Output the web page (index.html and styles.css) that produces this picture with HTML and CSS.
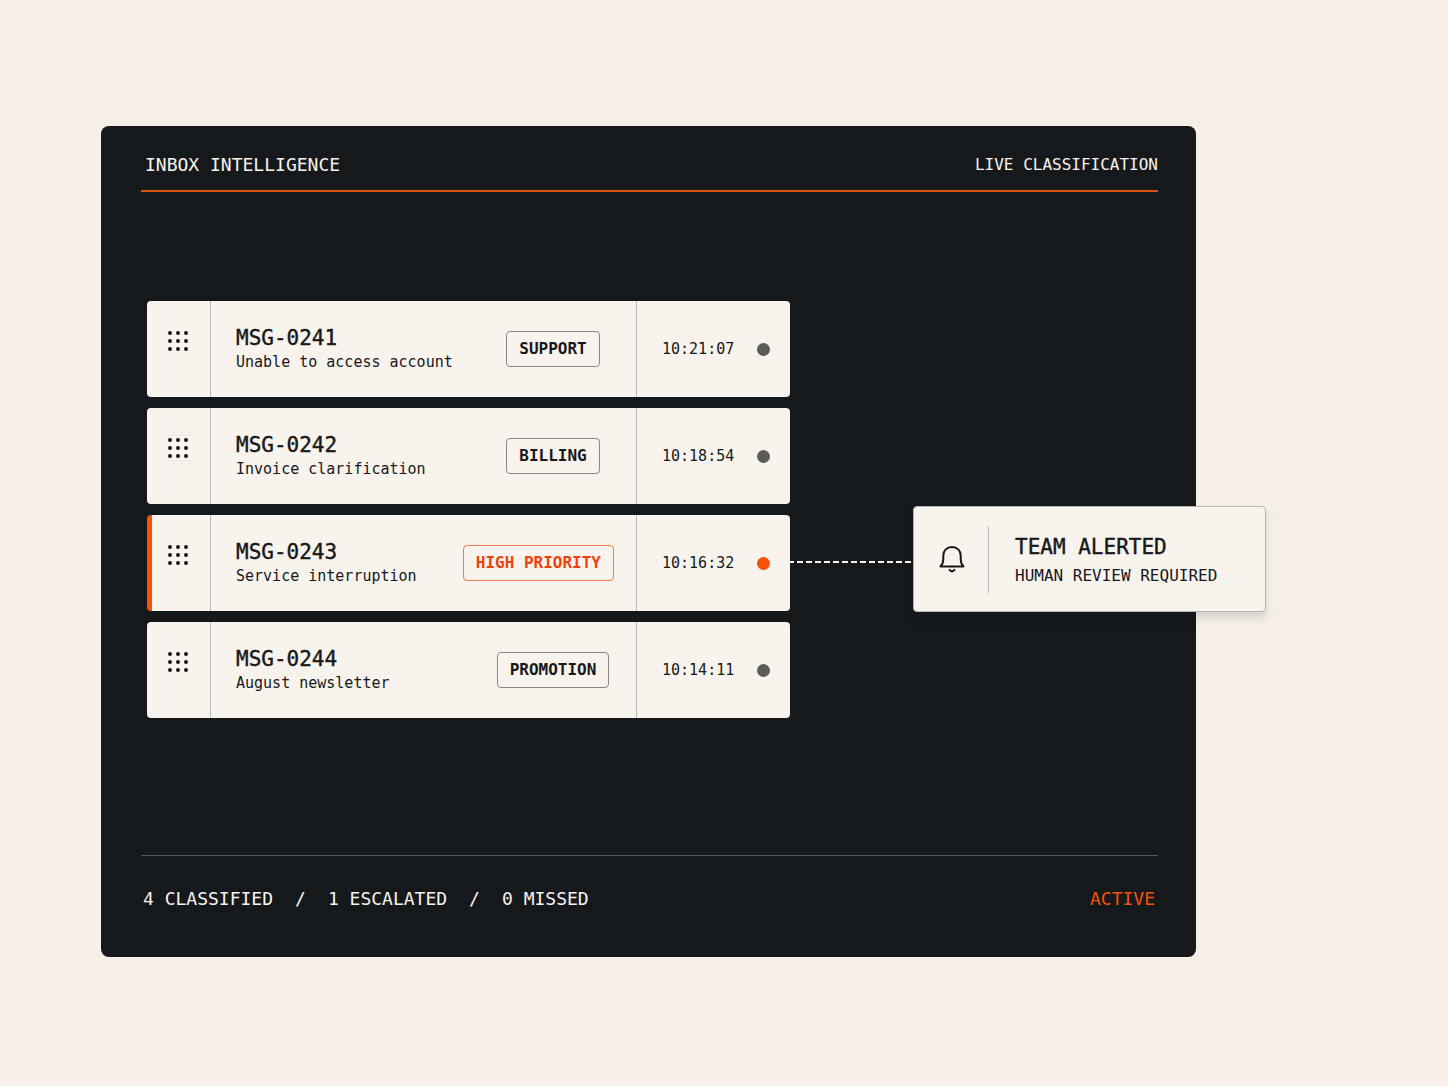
FILE: index.html
```html
<!DOCTYPE html>
<html lang="en">
<head>
  <meta charset="utf-8">
  <meta name="viewport" content="width=device-width, initial-scale=1">
  <title>Inbox Intelligence</title>
  <link rel="stylesheet" href="styles.css">
</head>
<body>
  <svg width="0" height="0" class="sprite" aria-hidden="true">
    <symbol id="grip" viewBox="0 0 22 22">
      <circle cx="3" cy="3" r="2"/><circle cx="11" cy="3" r="2"/><circle cx="19" cy="3" r="2"/>
      <circle cx="3" cy="11" r="2"/><circle cx="11" cy="11" r="2"/><circle cx="19" cy="11" r="2"/>
      <circle cx="3" cy="19" r="2"/><circle cx="11" cy="19" r="2"/><circle cx="19" cy="19" r="2"/>
    </symbol>
  </svg>

  <main class="panel">
    <header class="panel-header">
      <h1 class="panel-title">INBOX INTELLIGENCE</h1>
      <p class="panel-mode">LIVE CLASSIFICATION</p>
    </header>

    <div class="board">
      <ul class="messages">
        <li class="message">
          <button class="grip" type="button" aria-label="Reorder MSG-0241"><svg class="grip-icon"><use href="#grip"/></svg></button>
          <div class="message-body">
            <div class="message-text">
              <h2 class="message-id">MSG-0241</h2>
              <p class="message-subject">Unable to access account</p>
            </div>
            <div class="tag-slot"><span class="tag">SUPPORT</span></div>
          </div>
          <div class="message-meta"><time>10:21:07</time><span class="dot"></span></div>
        </li>
        <li class="message">
          <button class="grip" type="button" aria-label="Reorder MSG-0242"><svg class="grip-icon"><use href="#grip"/></svg></button>
          <div class="message-body">
            <div class="message-text">
              <h2 class="message-id">MSG-0242</h2>
              <p class="message-subject">Invoice clarification</p>
            </div>
            <div class="tag-slot"><span class="tag">BILLING</span></div>
          </div>
          <div class="message-meta"><time>10:18:54</time><span class="dot"></span></div>
        </li>
        <li class="message message-urgent">
          <button class="grip" type="button" aria-label="Reorder MSG-0243"><svg class="grip-icon"><use href="#grip"/></svg></button>
          <div class="message-body">
            <div class="message-text">
              <h2 class="message-id">MSG-0243</h2>
              <p class="message-subject">Service interruption</p>
            </div>
            <div class="tag-slot"><span class="tag">HIGH PRIORITY</span></div>
          </div>
          <div class="message-meta"><time>10:16:32</time><span class="dot"></span></div>
        </li>
        <li class="message">
          <button class="grip" type="button" aria-label="Reorder MSG-0244"><svg class="grip-icon"><use href="#grip"/></svg></button>
          <div class="message-body">
            <div class="message-text">
              <h2 class="message-id">MSG-0244</h2>
              <p class="message-subject">August newsletter</p>
            </div>
            <div class="tag-slot"><span class="tag">PROMOTION</span></div>
          </div>
          <div class="message-meta"><time>10:14:11</time><span class="dot"></span></div>
        </li>
      </ul>

      <div class="escalation">
        <svg class="connector" aria-hidden="true"><line x1="0" y1="9" x2="100%" y2="9"/></svg>
        <aside class="alert">
          <svg class="bell" viewBox="0 0 28 30" aria-hidden="true">
            <path d="M2.500 22.500C4.700 20.300 5.300 18 5.300 15V11.500C5.300 6.500 9 3 14 3s8.700 3.500 8.700 8.500v3.500c0 3 .6 5.300 2.800 7.500z"/>
            <path class="clapper" d="M10.800 25.500 14 27.600 17.200 25.500"/>
          </svg>
          <div class="alert-text">
            <h2 class="alert-title">TEAM ALERTED</h2>
            <p class="alert-note">HUMAN REVIEW REQUIRED</p>
          </div>
        </aside>
      </div>
    </div>

    <footer class="panel-footer">
      <p class="totals"><span>4 CLASSIFIED</span><span>/</span><span>1 ESCALATED</span><span>/</span><span>0 MISSED</span></p>
      <p class="state">ACTIVE</p>
    </footer>
  </main>
</body>
</html>
```

FILE: styles.css
```css
:root {
  --paper: #f6efe8;
  --card: #f8f3ed;
  --ink: #15191c;
  --text: #16181a;
  --orange: #f4510b;
  --rule: #b9b8b5;
}

* {
  box-sizing: border-box;
}

body {
  margin: 0;
  padding: 126px 252px 129px 101px;
  background: var(--paper);
  color: var(--text);
  font-family: "DejaVu Sans Mono", "Liberation Mono", monospace;
  font-size: 16px;
  line-height: 24px;
}

h1, h2, p, ul {
  margin: 0;
  padding: 0;
  font-size: inherit;
  font-weight: 400;
}

.sprite {
  display: block;
}

.panel {
  padding: 0 38px 0 40px;
  border-radius: 8px;
  background: var(--ink);
  color: var(--card);
}

.panel-header {
  display: flex;
  justify-content: space-between;
  align-items: center;
  padding: 27px 0 13px 4px;
  border-bottom: 2px solid #d9520f;
}

.panel-title,
.totals,
.state {
  font-size: 18px;
}

.board {
  display: flex;
  padding: 109px 0 137px 6px;
}

.messages {
  flex: 0 1 643px;
  display: flex;
  flex-direction: column;
  gap: 11px;
  list-style: none;
}

.message {
  display: flex;
  min-height: 96px;
  border-radius: 4px;
  background: var(--card);
  color: var(--text);
}

.message-urgent {
  background: linear-gradient(to right, var(--orange) 5px, var(--card) 5px);
}

.grip {
  display: flex;
  justify-content: center;
  align-items: center;
  width: 64px;
  padding: 0 1px 16px 0;
  border: 0;
  border-right: 1px solid var(--rule);
  background: none;
  cursor: grab;
}

.grip-icon {
  width: 22px;
  height: 22px;
  fill: var(--text);
}

.message-body {
  flex: 1;
  display: flex;
  justify-content: space-between;
  align-items: center;
  padding: 0 22px 0 25px;
}

.message-text {
  padding-top: 2px;
}

.message-id,
.alert-title {
  font-size: 21px;
  -webkit-text-stroke: 0.4px;
}

.message-subject,
.message-meta {
  font-size: 15px;
}

.tag-slot {
  min-width: 122px;
  text-align: center;
}

.tag {
  display: inline-block;
  padding: 5px 12px;
  border: 1px solid #85878a;
  border-radius: 4px;
  font-weight: 700;
}

.message-urgent .tag {
  border-color: #f4794b;
  color: #ee420c;
}

.message-meta {
  display: flex;
  justify-content: space-between;
  align-items: center;
  width: 154px;
  padding: 0 20px 0 25px;
  border-left: 1px solid var(--rule);
}

.dot {
  width: 13px;
  height: 13px;
  border-radius: 50%;
  background: #5b5b5a;
}

.message-urgent .dot {
  background: var(--orange);
}

.escalation {
  flex: 1;
  display: flex;
  align-items: center;
  align-self: flex-end;
  margin: 0 -108px 106px 0;
}

.connector {
  flex: 1;
  width: 0;
  height: 12px;
  stroke: var(--card);
  stroke-width: 2;
  stroke-dasharray: 6 3;
  stroke-dashoffset: 2;
}

.alert {
  display: flex;
  align-items: center;
  width: 353px;
  height: 106px;
  padding-left: 24px;
  border: 1px solid #b4b4b2;
  border-radius: 4px;
  background: var(--card);
  box-shadow: 0 6px 8px rgb(21 25 28 / 14%);
  color: var(--text);
}

.bell {
  width: 28px;
  height: 30px;
  margin-right: 22px;
  fill: none;
  stroke: currentColor;
  stroke-width: 2;
  stroke-linejoin: round;
}

.alert-text {
  display: flex;
  flex-direction: column;
  gap: 5px;
  padding: 9px 0 5px 26px;
  border-left: 1px solid var(--rule);
}

.panel-footer {
  display: flex;
  justify-content: space-between;
  padding: 31px 3px 46px 2px;
  border-top: 1px solid #55585a;
}

.totals {
  display: flex;
  gap: 22px;
}

.state {
  color: var(--orange);
}

@media (max-width: 1380px) {
  body {
    padding: 48px;
  }

  .board {
    flex-direction: column;
    gap: 24px;
  }

  .messages {
    flex-basis: auto;
  }

  .escalation {
    align-self: flex-start;
    margin: 0;
  }

  .connector {
    display: none;
  }
}
```
